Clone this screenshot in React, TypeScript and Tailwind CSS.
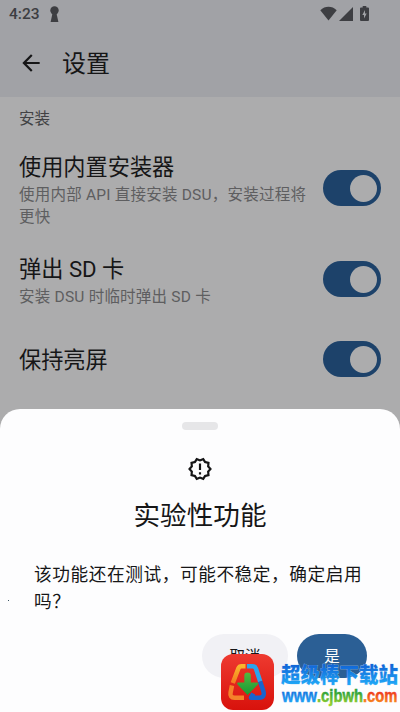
import { MdArrowBack, MdOutlineNewReleases } from 'react-icons/md';

const settings = [
  {
    title: '使用内置安装器',
    detail: '使用内部 API 直接安装 DSU，安装过程将更快',
    row: 'h-[78px]',
  },
  {
    title: '弹出 SD 卡',
    detail: '安装 DSU 时临时弹出 SD 卡',
    row: 'mt-[13px] h-[78px]',
  },
  {
    title: '保持亮屏',
    detail: '',
    row: 'mt-[23px] h-[36px]',
  },
];

function StatusBar() {
  return (
    <div className="flex h-7 items-center pl-[9px] pr-[31px] text-[#3d3e42]">
      <span className="text-[15.5px] leading-7 font-medium">4:23</span>
      <svg className="ml-[10px] h-4 w-[9px]" viewBox="0 0 9 16" fill="currentColor">
        <circle cx="4.5" cy="4.5" r="4.2" />
        <path d="M2.6 7h3.8l2 9H.6z" />
      </svg>
      <div className="ml-auto flex items-center pb-px">
        <svg className="h-[15px] w-[17px]" viewBox="0 0 17 15" fill="currentColor">
          <path d="M8.5 14.6 0.3 4.2C5-.4 12-.4 16.7 4.2z" />
        </svg>
        <svg className="ml-[2px] h-[14px] w-[14px]" viewBox="0 0 14 14" fill="currentColor">
          <path d="M14 0v14H0z" />
        </svg>
        <svg className="ml-[7px] h-[15px] w-[9px]" viewBox="0 0 9 15">
          <path
            d="M2.7 0h3.6v1.5H8a1 1 0 0 1 1 1V14a1 1 0 0 1-1 1H1a1 1 0 0 1-1-1V2.500a1 1 0 0 1 1-1h1.700z"
            fill="currentColor"
          />
          <path d="M5 4 2.300 9H4v3.500L6.700 7.600H5z" fill="#a1a2a6" />
        </svg>
      </div>
    </div>
  );
}

function Toggle() {
  return (
    <div className="flex h-9 w-[58px] shrink-0 items-center justify-end rounded-full bg-[#1d426a] pr-[4.5px]">
      <div className="size-[27px] rounded-full bg-[#acacad]" />
    </div>
  );
}

function SiteLogo() {
  return (
    <svg className="h-[56px] w-[53px] shrink-0" viewBox="0 0 53 56">
      <defs>
        <linearGradient id="tile" x1="0" y1="0" x2="0" y2="1">
          <stop offset="0" stopColor="#ee3a30" />
          <stop offset="1" stopColor="#d8120c" />
        </linearGradient>
        <linearGradient id="amber" x1="0" y1="0" x2="0" y2="1">
          <stop offset="0" stopColor="#f9b62c" />
          <stop offset="1" stopColor="#f47b20" />
        </linearGradient>
        <linearGradient id="leaf" x1="0" y1="0" x2="0" y2="1">
          <stop offset="0" stopColor="#54b83f" />
          <stop offset="1" stopColor="#159a35" />
        </linearGradient>
      </defs>
      <rect width="53" height="56" rx="12" fill="url(#tile)" />
      <g fill="none" strokeWidth="4.500" strokeLinejoin="round">
        <path d="M24.500 12.200h-4q-2.200 0-3 2L11.800 29" stroke="url(#amber)" />
        <path d="M11 31.500 9.600 38.500q-1 5.200 4 5.200H23" stroke="#f5822a" />
        <path d="M26 12.200h5.500q2.600 0 3.500 2.600l4.200 12.700" stroke="#2aa4ee" />
        <path d="M39.200 27.500 42.300 37q2 6.700-4.300 6.700h-8l2.300-4.200" stroke="#1765cf" />
      </g>
      <path
        d="M26.500 18.500q3.300 0 3.300 3v7h6.400q2 .3.500 2.200L26.500 41 16.800 30.700q-1.400-1.900.5-2.200h6v-7q0-3 3.200-3z"
        fill="url(#leaf)"
      />
    </svg>
  );
}

function Watermark() {
  return (
    <div className="absolute top-[654px] left-[221px] flex h-[58px] w-[179px]">
      <SiteLogo />
      <svg className="ml-[6px] h-[58px] w-[120px] shrink-0 overflow-visible" viewBox="0 0 120 58">
        <defs>
          <linearGradient id="sky" x1="0" y1="0" x2="0" y2="1">
            <stop offset="0.1" stopColor="#1167d8" />
            <stop offset="1" stopColor="#22b0fb" />
          </linearGradient>
          <linearGradient id="lime" x1="0" y1="0" x2="0" y2="1">
            <stop offset="0.3" stopColor="#2fa23a" />
            <stop offset="1" stopColor="#a0d52c" />
          </linearGradient>
          <linearGradient id="flame" x1="0" y1="0" x2="0" y2="1">
            <stop offset="0.3" stopColor="#ee3a1c" />
            <stop offset="1" stopColor="#fba01e" />
          </linearGradient>
        </defs>
        <text
          x="1"
          y="28"
          textLength="117"
          fontSize="21"
          fontWeight="900"
          fill="url(#sky)"
          stroke="#a9d0f2"
          strokeWidth="0.500"
          paintOrder="stroke"
          lengthAdjust="spacingAndGlyphs"
        >
          超级棒下载站
        </text>
        <g fontSize="18" fontWeight="700" fontFamily="'Liberation Sans', sans-serif" strokeWidth="0.500">
          <text
            x="2"
            y="48"
            textLength="35"
            lengthAdjust="spacingAndGlyphs"
            fill="url(#sky)"
            stroke="url(#sky)"
          >
            www
          </text>
          <text
            x="37"
            y="48"
            textLength="46"
            lengthAdjust="spacingAndGlyphs"
            fill="url(#lime)"
            stroke="url(#lime)"
          >
            .cjbwh
          </text>
          <text
            x="83"
            y="48"
            textLength="34.500"
            lengthAdjust="spacingAndGlyphs"
            fill="url(#flame)"
            stroke="url(#flame)"
          >
            .com
          </text>
        </g>
      </svg>
    </div>
  );
}

export default function App() {
  return (
    <div className="relative flex h-[712px] w-[400px] flex-col overflow-hidden bg-[#acacad] font-['Roboto','Noto_Sans_CJK_SC',sans-serif] text-[#161617]">
      <header className="h-[97px] shrink-0 bg-[#a1a2a6]">
        <StatusBar />
        <div className="flex h-[69px] items-center pl-[18px]">
          <MdArrowBack size={26} />
          <h1 className="ml-[18px] pt-[3px] text-[24px] leading-8">设置</h1>
        </div>
      </header>

      <main className="h-[312px] shrink-0 pr-[19px] pl-[19px]">
        <h2 className="pt-[11px] text-[15.500px] leading-[22px] text-[#424244]">安装</h2>
        <div className="mt-[19px]">
          {settings.map((item) => (
            <div key={item.title} className={`flex items-center justify-between ${item.row}`}>
              <div className="w-[292px]">
                <h3 className="pt-[2px] text-[22.200px] leading-8">{item.title}</h3>
                {item.detail && (
                  <p className="pt-px text-[15.500px] leading-[22px] tracking-[0.22px] text-[#5e5e60]">
                    {item.detail}
                  </p>
                )}
              </div>
              <Toggle />
            </div>
          ))}
        </div>
      </main>

      {/* rounded corners sit over the dimmed page */}
      <section className="flex h-[303px] shrink-0 flex-col items-center rounded-t-[20px] bg-[#fdfdfe]">
        <div className="mt-[13px] h-[8px] w-9 rounded-full bg-[#e6e6e8]" />
        <MdOutlineNewReleases size={26} className="mt-[26px]" />
        <h2 className="mt-[16px] text-[26.600px] leading-9">实验性功能</h2>
        <p className="mt-[28px] w-[332px] text-[17.700px] leading-[27px] tracking-[0.55px]">
          该功能还在测试，可能不稳定，确定启用吗？
        </p>
        <div className="mt-[18px] flex w-full justify-end gap-[9px] pr-[33px] text-[15.500px]">
          <button className="h-11 w-[86px] rounded-full bg-[#f1f1f5] pt-1">取消</button>
          <button className="h-11 w-[70px] rounded-full bg-[#2b5f95] pt-1 text-white">是</button>
        </div>
      </section>

      <span className="absolute top-[600px] left-2 size-px bg-[#3b5563]" />
      <Watermark />
    </div>
  );
}
